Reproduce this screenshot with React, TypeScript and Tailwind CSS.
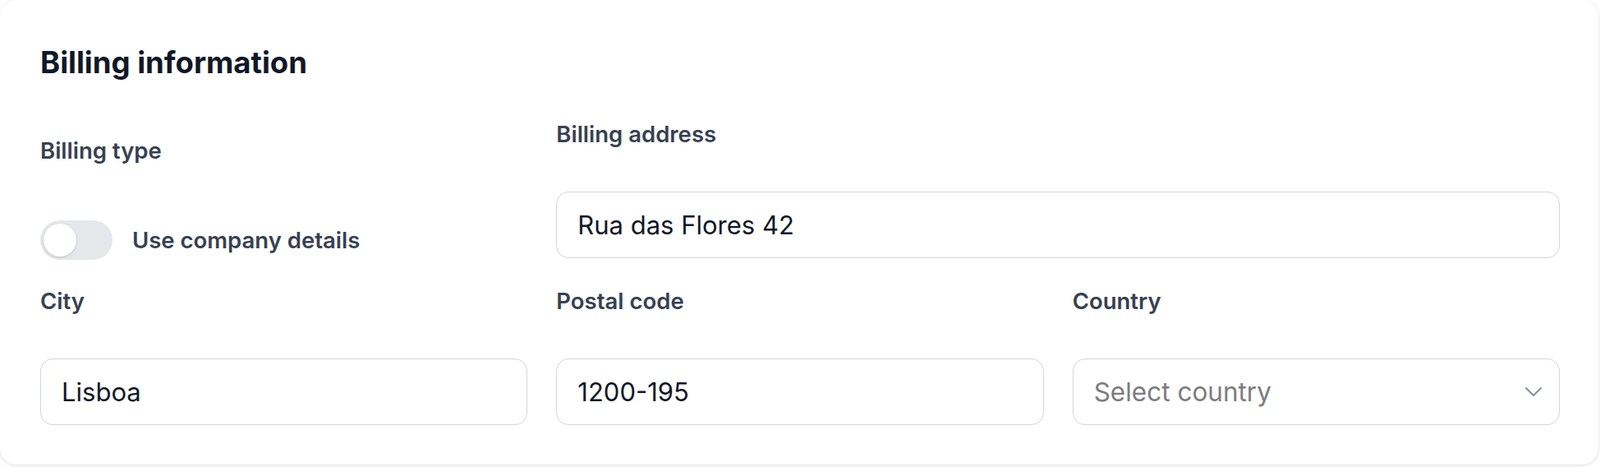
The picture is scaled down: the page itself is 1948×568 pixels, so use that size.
import { useState } from 'react'

type FieldProps = {
  label: string
  value?: string
  placeholder?: string
}

const labelClass = "block text-[27.5px] leading-[32px] font-semibold text-[#374151]"
const boxClass =
  "mt-[54px] flex h-[81px] w-full items-center rounded-[15px] border-[1.5px] border-[#d1d5db] bg-white px-[25px] text-[31px] text-[#111827]"

const TextField = ({ label, value, placeholder }: FieldProps) => (
  <div>
    <label className={labelClass}>{label}</label>
    <input
      type="text"
      defaultValue={value}
      placeholder={placeholder}
      className={`${boxClass} outline-none placeholder:text-[#7c7c80]`}
    />
  </div>
)

const CountrySelect = () => (
  <div>
    <label className={labelClass}>Country</label>
    <button type="button" className={`${boxClass} justify-between pr-[20px] text-left`}>
      <span className="text-[31.5px] text-[#7c7c80]">Select country</span>
      <svg width="22" height="14" viewBox="0 0 22 14" fill="none" className="text-[#8b93a1]">
        <path d="M2 2 L11 11 L20 2" stroke="currentColor" strokeWidth="2.2" strokeLinecap="round" strokeLinejoin="round" />
      </svg>
    </button>
  </div>
)

const Toggle = ({ on, onChange }: { on: boolean; onChange: (v: boolean) => void }) => (
  <button
    type="button"
    role="switch"
    aria-checked={on}
    onClick={() => onChange(!on)}
    className={`flex h-[48px] w-[88px] shrink-0 items-center rounded-full p-[4px] ${
      on ? 'bg-[#111827]' : 'bg-[#e5e7eb]'
    }`}
  >
    <span
      className={`h-[40px] w-[40px] rounded-full bg-white shadow-[0_1px_3px_rgba(0,0,0,0.18)] ${
        on ? 'translate-x-[40px]' : 'translate-x-0'
      }`}
    />
  </button>
)

const App = () => {
  const [useCompany, setUseCompany] = useState(false)

  return (
    <div className="min-h-screen bg-white font-['Inter','Noto_Sans',sans-serif]">
      <div className="w-[1946px] rounded-[20px] bg-white pt-[54px] pr-[47px] pb-[48px] pl-[49px] shadow-[0_1px_4px_rgba(0,0,0,0.14)]">
        <h2 className="text-[36.5px] leading-[44px] font-bold text-[#111827]">Billing information</h2>

        <div className="mt-[49px] grid grid-cols-3 gap-x-[35px] gap-y-[34px]">
          <div className="pt-[20px]">
            <span className={labelClass}>Billing type</span>
            <div className="mt-[69px] flex items-center gap-[24px]">
              <Toggle on={useCompany} onChange={setUseCompany} />
              <span className="text-[27.5px] leading-[32px] font-semibold text-[#374151]">Use company details</span>
            </div>
          </div>
          <div className="col-span-2">
            <TextField label="Billing address" value="Rua das Flores 42" />
          </div>

          <TextField label="City" value="Lisboa" />
          <TextField label="Postal code" value="1200-195" />
          <CountrySelect />
        </div>
      </div>
    </div>
  )
}

export default App
